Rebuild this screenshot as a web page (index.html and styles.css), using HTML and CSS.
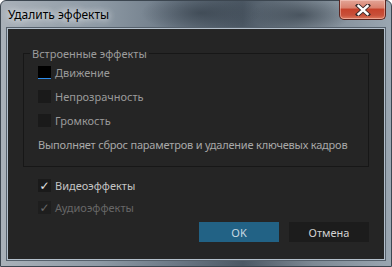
FILE: index.html
```html
<!DOCTYPE html>
<html lang="ru">
<head>
    <meta charset="UTF-8">
    <title>Удалить эффекты</title>
    <link rel="stylesheet" href="styles.css">
</head>
<body>
    <div class="window">
        <div class="titlebar">
            <span class="title">Удалить эффекты</span>
            <button class="close" aria-label="Закрыть">
                <svg width="16" height="12" viewBox="0 0 16 12">
                    <path d="M3 1.5 L13 10.5 M13 1.5 L3 10.5" stroke="#3a2a2a" stroke-width="4.2" stroke-linecap="square"/>
                    <path d="M3.5 2 L12.5 10 M12.5 2 L3.5 10" stroke="#ffffff" stroke-width="2.4" stroke-linecap="square"/>
                </svg>
            </button>
        </div>
        <div class="content">
            <fieldset class="group">
                <legend>Встроенные эффекты</legend>
                <label class="row"><span class="box focus"></span>Движение</label>
                <label class="row"><span class="box"></span>Непрозрачность</label>
                <label class="row"><span class="box"></span>Громкость</label>
                <p class="note">Выполняет сброс параметров и удаление ключевых кадров</p>
            </fieldset>

            <label class="row main first"><span class="box checked">✓</span>Видеоэффекты</label>
            <label class="row main disabled"><span class="box checked">✓</span>Аудиоэффекты</label>

            <div class="actions">
                <button class="btn primary">OK</button>
                <button class="btn">Отмена</button>
            </div>
        </div>
    </div>
</body>
</html>
```

FILE: styles.css
```css
* {
    margin: 0;
    padding: 0;
    box-sizing: border-box;
}
body {
    width: 392px;
    height: 267px;
    overflow: hidden;
    font-family: 'Noto Sans', 'DejaVu Sans', sans-serif;
}
.window {
    width: 392px;
    height: 267px;
    display: flex;
    flex-direction: column;
    padding: 0 6px 6px 6px;
    background:
        radial-gradient(ellipse 60px 20px at 200px 12px, rgba(40, 50, 60, 0.55), transparent),
        radial-gradient(ellipse 50px 18px at 300px 14px, rgba(30, 40, 50, 0.5), transparent),
        linear-gradient(90deg, #a9b1b9 0%, #8e9aa5 25%, #6b7885 45%, #4c5864 62%, #7d8994 80%, #9aa6b1 100%);
    border: 1px solid #3c4650;
    border-radius: 6px 6px 0 0;
}
.titlebar {
    height: 27px;
    display: flex;
    justify-content: space-between;
    align-items: flex-start;
}
.title {
    margin: 5px 0 0 1px;
    font-size: 12px;
    color: #000;
    text-shadow: 0 0 6px rgba(255, 255, 255, 0.9), 0 0 10px rgba(255, 255, 255, 0.6);
}
.close {
    width: 47px;
    height: 20px;
    margin-top: -1px;
    margin-right: -1px;
    border: 1px solid #5c2520;
    border-top: none;
    border-radius: 0 0 5px 5px;
    background: linear-gradient(#e3a597 0%, #d9826f 40%, #c6432c 50%, #c8503a 80%, #dc7a5e 100%);
    box-shadow: inset 0 0 0 1px rgba(255, 220, 210, 0.45);
    display: flex;
    align-items: center;
    justify-content: center;
}
.content {
    flex: 1;
    background: #252525;
    border: 1px solid #b4c0cc;
    outline: 1px solid #56616c;
    padding: 17px 15px 0 15px;
    color: #a8a8a8;
    font-size: 11px;
}
.group {
    border: 1px solid #171717;
    padding: 5px 14px 15px 14px;
    display: flex;
    flex-direction: column;
    gap: 11px;
}
.group legend {
    margin-left: -8px;
    padding: 0 2px;
    font-size: 11px;
    color: #9c9c9c;
}
.row {
    display: flex;
    align-items: center;
    gap: 4px;
    height: 13px;
    line-height: 13px;
    color: #9a9a9a;
}
.box {
    width: 13px;
    height: 13px;
    background: #1a1a1a;
    display: flex;
    align-items: center;
    justify-content: center;
    font-size: 12px;
    color: #e8e8e8;
}
.box.focus {
    background: #000;
    border-bottom: 1px solid #2d8ceb;
}
.note {
    line-height: 13px;
    white-space: nowrap;
    letter-spacing: -0.2px;
}
.main {
    margin-left: 15px;
    color: #c4c4c4;
}
.main.first {
    margin-top: 12px;
}
.main + .main {
    margin-top: 9px;
}
.disabled {
    color: #676767;
}
.disabled .box {
    color: #6a6a6a;
    background: #1e1e1e;
}
.actions {
    display: flex;
    justify-content: flex-end;
    gap: 10px;
    margin-top: 8px;
}
.btn {
    width: 80px;
    height: 20px;
    border: none;
    background: #1c1c1c;
    color: #d2d2d2;
    font-family: 'Noto Sans', 'DejaVu Sans', sans-serif;
    font-size: 11px;
}
.btn.primary {
    background: #226285;
    color: #c8d8e2;
}
```
